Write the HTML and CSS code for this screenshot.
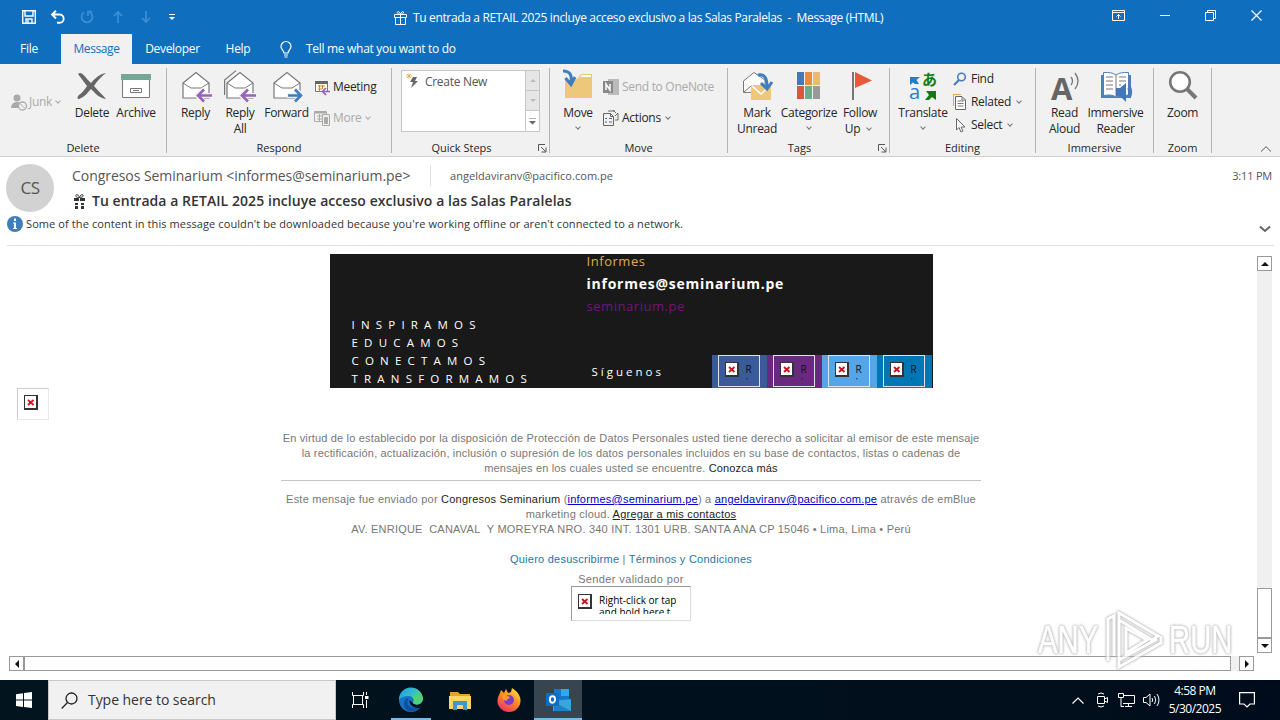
FILE: index.html
```html
<!DOCTYPE html>
<html lang="en">
<head>
    <meta charset="UTF-8">
    <title>Message (HTML)</title>
    <link rel="stylesheet" href="styles.css">
</head>
<body>
<svg class="defs" width="0" height="0">
    <symbol id="envelope" viewBox="0 0 32 32">
        <path d="M3 13 16 2.500 29 13V28H3Z" fill="#fff" stroke="#777" stroke-width="1.200"/>
        <path d="M3 13 11 18H21L29 13" fill="none" stroke="#777"/>
    </symbol>
    <symbol id="broken" viewBox="0 0 14 15">
        <path d="M0 0H14V15H0Z" fill="#333"/>
        <path d="M1 1H12V13H1Z" fill="#fff"/>
        <path d="M4 5 9.500 10M9.500 5 4 10" stroke="#d01020" stroke-width="1.800"/>
    </symbol>
    <symbol id="launcher" viewBox="0 0 9 9">
        <path d="M.5 7V.5H7M3 3 7.500 7.500M8 3.500V8H3.500" fill="none" stroke="#555"/>
    </symbol>
</svg>

<div class="titlebar">
    <div class="quick">
        <svg width="14" height="14" viewBox="0 0 14 14" fill="none" stroke="#fff" stroke-width="1.400"><path d="M.7.7H13.300V13.300H.7ZM3 1V6H11V1M4 13V9H10V13M6 10V13"/></svg>
        <svg width="16" height="14" viewBox="0 0 16 14" fill="none" stroke="#fff" stroke-width="1.900"><path d="M6 .7 2 4.500 6 8.500M2 4.500H9.500A4 4 0 0 1 9.500 12.800H7"/></svg>
        <svg width="14" height="14" viewBox="0 0 14 14" fill="none" stroke="#3c8fd4" stroke-width="1.700"><path d="M4 2.200A5.500 5.500 0 1 0 10 2.200M8 6V1.700H12"/></svg>
        <svg width="10" height="12" viewBox="0 0 10 12" fill="none" stroke="#3c8fd4" stroke-width="1.700"><path d="M5 12V1M1 5 5 1 9 5"/></svg>
        <svg width="10" height="12" viewBox="0 0 10 12" fill="none" stroke="#3c8fd4" stroke-width="1.700"><path d="M5 0V11M1 7 5 11 9 7"/></svg>
        <svg width="6" height="8" viewBox="0 0 6 8" fill="#fff"><path d="M0 1H6V2H0ZM0 4H6L3 7Z"/></svg>
    </div>
    <div class="title">
        <svg width="13" height="14" viewBox="0 0 13 14" fill="none" stroke="#fff"><path d="M.5 3.500H12.500V6.500H.5ZM1.500 6.500V13.500H11.500V6.500M6.500 3.500V13.500M6.500 3.500C2 3 3 0 4.500.7 6 1.200 6.500 3.500 6.500 3.500 7 1 9 0 9.500 1 10 2.500 8 3.300 6.500 3.500"/></svg>
        <span>Tu entrada a RETAIL 2025 incluye acceso exclusivo a las Salas Paralelas &nbsp;-&nbsp; Message (HTML)</span>
    </div>
    <div class="winbtns">
        <svg width="13" height="11" viewBox="0 0 13 11" fill="none" stroke="#fff"><path d="M.5.5H12.500V10.500H.5ZM.5 2.500H12.500M6.500 9V4.500M4.500 6.500 6.500 4.500 8.500 6.500"/></svg>
        <svg width="10" height="11" viewBox="0 0 10 11" stroke="#fff"><path d="M0 5.500H10"/></svg>
        <svg width="11" height="11" viewBox="0 0 11 11" fill="none" stroke="#fff"><path d="M.5 2.500H8.500V10.500H.5ZM2.500 2.500V.5H10.500V8.500H8.500"/></svg>
        <svg width="11" height="11" viewBox="0 0 11 11" stroke="#fff" stroke-width="1.200"><path d="M.5.5 10.500 10.500M10.500.5.5 10.500"/></svg>
    </div>
</div>

<div class="tabs">
    <span class="tab file">File</span>
    <span class="tab current">Message</span>
    <span class="tab dev">Developer</span>
    <span class="tab help">Help</span>
    <svg width="12" height="17" viewBox="0 0 12 17" fill="none" stroke="#fff" stroke-width="1.200"><path d="M4 12C4 9.500 1 8.500 1 5.500A5 5 0 0 1 11 5.500C11 8.500 8 9.500 8 12ZM4 14H8M4.500 16H7.500"/></svg>
    <span class="tell">Tell me what you want to do</span>
</div>

<div class="ribbon">
    <div class="group g-delete">
        <div class="items">
            <div class="small junk off">
                <svg width="16" height="17" viewBox="0 0 16 17"><circle cx="6" cy="4" r="3.500" fill="#aaa"/><path d="M0 14C0 7 9 7 10 10L7 14Z" fill="#aaa"/><circle cx="11.500" cy="12" r="4" fill="#f1f1f1" stroke="#aaa" stroke-width="1.300"/><path d="M9 9.500 14 14.500" stroke="#aaa"/></svg>
                <span>Junk</span><i class="arrow"></i>
            </div>
            <div class="big" style="width:44px">
                <svg width="32" height="32" viewBox="0 0 32 32"><path d="M2 4C5 1 8 5 11 9L15 13C19 8 24 4 30 3 26 6 21 11 18 16 22 21 27 25 30 29 23 28 19 23 15 19 12 22 9 27 3 29 1 29 1 27 3 25 6 23 9 19 11 16Z" fill="#666"/></svg>
                <span>Delete</span>
            </div>
            <div class="big" style="width:44px">
                <svg width="32" height="32" viewBox="0 0 32 32"><path d="M2.500 9.500H29.500V27.500H2.500Z" fill="#fff" stroke="#777"/><path d="M1 4H31V10H1Z" fill="#72a895"/><path d="M10.500 18.500H21.500V22.500H10.500ZM13 20.500H19" fill="none" stroke="#777"/></svg>
                <span>Archive</span>
            </div>
        </div>
        <div class="name">Delete</div>
    </div>

    <div class="group g-respond">
        <div class="items">
            <div class="big" style="width:45px">
                <svg width="32" height="32" viewBox="0 0 32 32"><use href="#envelope"/><path d="M32 25.500H18M24 19 17.500 25.500 24 32" fill="none" stroke="#f1f1f1" stroke-width="5"/><path d="M32 25.500H18M24 19.500 18 25.500 24 31.500" fill="none" stroke="#9563b8" stroke-width="2.600"/></svg>
                <span>Reply</span>
            </div>
            <div class="big" style="width:44px">
                <svg width="32" height="32" viewBox="0 0 32 32"><path d="M.6 25V10L12 .6" fill="none" stroke="#777" stroke-width="1.200"/><use href="#envelope"/><path d="M32 25.500H18M24 19 17.500 25.500 24 32" fill="none" stroke="#f1f1f1" stroke-width="5"/><path d="M32 25.500H18M24 19.500 18 25.500 24 31.500" fill="none" stroke="#9563b8" stroke-width="2.600"/></svg>
                <span>Reply<br>All</span>
            </div>
            <div class="big" style="width:49px">
                <svg width="32" height="32" viewBox="0 0 32 32"><use href="#envelope"/><path d="M16 25.500H30M24 19 30.500 25.500 24 32" fill="none" stroke="#f1f1f1" stroke-width="5"/><path d="M17 25.500H30M24 19.500 30 25.500 24 31.500" fill="none" stroke="#3d7ebf" stroke-width="2.600"/></svg>
                <span>Forward</span>
            </div>
            <div class="stack two">
                <div class="small">
                    <svg width="16" height="15" viewBox="0 0 16 15"><path d="M1.500 1.500H13.500V11.500H1.500Z" fill="#fff" stroke="#777"/><path d="M1 1H14V4H1Z" fill="#666"/><path d="M4 6H11M4 9H8M5.500 5V11M8.500 5V9" stroke="#d9822b"/><path d="M16 11.500H9M12 8 8.500 11.500 12 15" fill="none" stroke="#9563b8" stroke-width="1.700"/></svg>
                    <span>Meeting</span>
                </div>
                <div class="small off">
                    <svg width="16" height="16" viewBox="0 0 16 16" fill="none" stroke="#aaa"><path d="M.5 1.500H12.500V11.500H.5ZM3 6H10M3 9H8M5.500 4V11"/><path d="M.5 2.500H12" stroke-width="2"/><path d="M8.500 4.500H15.500V15.500H8.500Z" fill="#eee"/><path d="M10.500 7.500H13.500V13.500H10.500Z" fill="#aaa"/></svg>
                    <span>More</span><i class="arrow"></i>
                </div>
            </div>
        </div>
        <div class="name">Respond</div>
    </div>

    <div class="group g-quick">
        <div class="gallery">
            <div class="step">
                <svg width="14" height="16" viewBox="0 0 14 16"><path d="M7 4H11L9 8H12L5 15 7 9H4Z" fill="#666"/><path d="M3 0V6M0 3H6M1 1 5 5M5 1 1 5" stroke="#e3a94c" stroke-width=".8"/></svg>
                <span>Create New</span>
            </div>
            <div class="spin">
                <i class="up"></i><i class="down"></i><i class="more"></i>
            </div>
        </div>
        <div class="name">Quick Steps</div>
        <svg class="launch" width="9" height="9"><use href="#launcher"/></svg>
    </div>

    <div class="group g-move">
        <div class="items">
            <div class="big" style="width:44px">
                <svg width="32" height="32" viewBox="0 0 32 32"><path d="M16 8 19 4H30V28H3V10H13Z" fill="#edc77a"/><path d="M18 7 20 5H29V7Z" fill="#fff"/><path d="M1 1C8 1 10 5 9 12M3.500 8 9 14.500 13 7" fill="none" stroke="#3d7ebf" stroke-width="3"/></svg>
                <span>Move</span><i class="arrow"></i>
            </div>
            <div class="stack two">
                <div class="small off">
                    <svg width="16" height="16" viewBox="0 0 16 16"><path d="M5 0H16V16H5Z" fill="#bbb"/><path d="M0 2H10V14H0Z" fill="#888"/><path d="M3 11V5L7 11V5" fill="none" stroke="#fff" stroke-width="1.500"/></svg>
                    <span>Send to OneNote</span>
                </div>
                <div class="small">
                    <svg width="16" height="16" viewBox="0 0 16 16" fill="none" stroke="#666"><path d="M.5 3.500H7.500L10.500 6.500V15.500H.5ZM7.500 3.500V6.500H10.500M2 8.500H4M6 8.500H9M2 12H4M6 12H9M5 1H12M10 0 13 3M15 3.500V10H12M15 3 12 6"/></svg>
                    <span>Actions</span><i class="arrow"></i>
                </div>
            </div>
        </div>
        <div class="name">Move</div>
    </div>

    <div class="group g-tags">
        <div class="items">
            <div class="big" style="width:44px">
                <svg width="32" height="32" viewBox="0 0 32 32"><path d="M2.500 22.500V11L13 2.500 24 10V22Z" fill="#fff" stroke="#777"/><path d="M3 22 10 16" stroke="#777"/><path d="M10 15H30V30H10Z" fill="#edc77a"/><path d="M11 16 20 24 29 16" fill="none" stroke="#fff" stroke-width="1.500"/><path d="M17 5C24 4 26 8 26 17M20 13 26 19 31 12" fill="none" stroke="#3d7ebf" stroke-width="3"/></svg>
                <span>Mark<br>Unread</span>
            </div>
            <div class="big" style="width:60px">
                <svg width="32" height="32" viewBox="0 0 32 32"><path d="M4 2H11V15H4Z" fill="#4478b8"/><path d="M12 2H19V15H12Z" fill="#ed8b3b"/><path d="M20 2H27V15H20Z" fill="#e6bd68"/><path d="M4 16H11V29H4Z" fill="#d9583b"/><path d="M12 16H19V29H12Z" fill="#72a88b"/><path d="M20 16H27V29H20Z" fill="#999"/></svg>
                <span>Categorize</span><i class="arrow"></i>
            </div>
            <div class="big" style="width:42px">
                <svg width="32" height="32" viewBox="0 0 32 32"><path d="M9 2V30" stroke="#777" stroke-width="2"/><path d="M11 2 28 10.500 11 18Z" fill="#e8593a"/></svg>
                <span>Follow<br>Up <i class="arrow"></i></span>
            </div>
        </div>
        <div class="name">Tags</div>
        <svg class="launch" width="9" height="9"><use href="#launcher"/></svg>
    </div>

    <div class="group g-editing">
        <div class="items">
            <div class="big" style="width:50px">
                <svg width="32" height="32" viewBox="0 0 32 32"><path d="M3 7H13L9.500 10 12 14H8L6 12.500 3 15Z" fill="#1e7fd0"/><path d="M19 21H29V30L25 27 22 30H18L22 25Z" fill="#107c10"/><text x="15" y="15" class="glyph-jp">あ</text><text x="2" y="29" class="glyph-a">a</text></svg>
                <span>Translate</span><i class="arrow"></i>
            </div>
            <div class="stack three">
                <div class="small">
                    <svg width="14" height="14" viewBox="0 0 14 14" fill="none" stroke="#4478b8"><circle cx="8.500" cy="5" r="3.800" stroke-width="1.500"/><path d="M6 8 1 13" stroke-width="2"/></svg>
                    <span>Find</span>
                </div>
                <div class="small">
                    <svg width="14" height="16" viewBox="0 0 14 16"><path d="M.5 12V.5H8" fill="none" stroke="#e3a94c"/><path d="M2.500 2.500H9L12.500 6V15.500H2.500Z" fill="#fff" stroke="#666"/><path d="M4.500 7H10.500M4.500 9.500H10.500M4.500 12H10.500M9 3V6H12" fill="none" stroke="#777"/></svg>
                    <span>Related</span><i class="arrow"></i>
                </div>
                <div class="small">
                    <svg width="14" height="16" viewBox="0 0 14 16"><path d="M3.500 1.500V13L6 10.500 8 15 10 14 8 10H12Z" fill="#fff" stroke="#666"/></svg>
                    <span>Select</span><i class="arrow"></i>
                </div>
            </div>
        </div>
        <div class="name">Editing</div>
    </div>

    <div class="group g-immersive">
        <div class="items">
            <div class="big" style="width:43px">
                <svg width="32" height="32" viewBox="0 0 32 32"><text x="2" y="30" class="glyph-read">A</text><path d="M22 7Q25 11 22 15M26 3Q32 11 26 19" fill="none" stroke="#777" stroke-width="1.300"/></svg>
                <span>Read<br>Aloud</span>
            </div>
            <div class="big" style="width:59px">
                <svg width="32" height="32" viewBox="0 0 32 32"><path d="M1 5H31V28H1Z" fill="#4f81b8"/><path d="M3.500 2.500Q12 2 16 5 20 2 28.500 2.500V25.500Q20 24 16 27 12 24 3.500 25.500Z" fill="#fff" stroke="#4f81b8"/><path d="M16 5V27M6 7H13M6 11H13M6 15H13M6 19H13M19 7H26M19 11H26M19 15H21" stroke="#777"/><path d="M16 18H20L26 13V32L20 26H16Z" fill="#4478b8"/><path d="M28 18Q30 22 28 26M30 16Q33 22 30 28" fill="none" stroke="#4478b8" stroke-width="1.300"/></svg>
                <span>Immersive<br>Reader</span>
            </div>
        </div>
        <div class="name">Immersive</div>
    </div>

    <div class="group g-zoom">
        <div class="items">
            <div class="big" style="width:57px">
                <svg width="32" height="32" viewBox="0 0 32 32"><circle cx="13" cy="12" r="9.800" fill="#fff" stroke="#777" stroke-width="2.600"/><path d="M20 19 29 28" stroke="#777" stroke-width="4"/></svg>
                <span>Zoom</span>
            </div>
        </div>
        <div class="name">Zoom</div>
    </div>
    <svg class="collapse" width="12" height="6" viewBox="0 0 12 6"><path d="M1 5.500 6 .7 11 5.500" fill="none" stroke="#555"/></svg>
</div>

<div class="header">
    <div class="avatar">CS</div>
    <div class="lines">
        <div class="from">
            <span class="sender">Congresos Seminarium &lt;informes@seminarium.pe&gt;</span>
            <span class="to">angeldaviranv@pacifico.com.pe</span>
            <span class="time">3:11 PM</span>
        </div>
        <div class="subject">
            <svg width="13" height="15" viewBox="0 0 13 15" fill="#333"><path d="M1 4H6V7H1ZM7 4H12V7H7ZM2 9H5V11H2ZM8 9H11V11H8ZM2 12H5V15H2ZM8 12H11V15H8Z"/><path d="M6.500 3.500C2 4 2 0 4 .7 6 1.200 6.500 3.500 6.500 3.500 7 1 9 0 10 1 11 3 8 3.500 6.500 3.500" fill="none" stroke="#333"/></svg>
            <span>Tu entrada a RETAIL 2025 incluye acceso exclusivo a las Salas Paralelas</span>
        </div>
    </div>
</div>
<div class="infobar">
    <svg width="16" height="16" viewBox="0 0 16 16"><circle cx="8" cy="8" r="8" fill="#3f7dbb"/><path d="M7 2.500H9V5H7ZM6 6.500H9V12H10V13H6V12H7V7.500H6Z" fill="#fff"/></svg>
    <span>Some of the content in this message couldn't be downloaded because you're working offline or aren't connected to a network.</span>
    <svg class="expand" width="12" height="8" viewBox="0 0 12 8"><path d="M1 1.500 6 6 11 1.500" fill="none" stroke="#666" stroke-width="2"/></svg>
</div>

<div class="viewer">
    <div class="mail">
        <div class="side">
            <div class="noimg tiny"><svg width="14" height="15"><use href="#broken"/></svg></div>
        </div>
        <div class="content">
            <div class="banner">
                <div class="motto">INSPIRAMOS<br>EDUCAMOS<br>CONECTAMOS<br>TRANSFORMAMOS</div>
                <div class="contact">
                    <div class="info">Informes</div>
                    <div class="address">informes@seminarium.pe</div>
                    <div class="site">seminarium.pe</div>
                    <div class="follow">
                        <span>Síguenos</span>
                        <div class="social">
                            <div class="fb"><p><svg width="14" height="15"><use href="#broken"/></svg><b>R<br>:</b></p></div>
                            <div class="ig"><p><svg width="14" height="15"><use href="#broken"/></svg><b>R<br>:</b></p></div>
                            <div class="tw"><p><svg width="14" height="15"><use href="#broken"/></svg><b>R<br>:</b></p></div>
                            <div class="in"><p><svg width="14" height="15"><use href="#broken"/></svg><b>R<br>:</b></p></div>
                        </div>
                    </div>
                </div>
            </div>
            <div class="legal">
                <div>En virtud de lo establecido por la disposición de Protección de Datos Personales usted tiene derecho a solicitar al emisor de este mensaje</div>
                <div>la rectificación, actualización, inclusión o supresión de los datos personales incluidos en su base de contactos, listas o cadenas de</div>
                <div>mensajes en los cuales usted se encuentre. <em>Conozca más</em></div>
            </div>
            <div class="legal sent">
                <div>Este mensaje fue enviado por <em>Congresos Seminarium</em> (<a>informes@seminarium.pe</a>) a <a>angeldaviranv@pacifico.com.pe</a> através de emBlue</div>
                <div>marketing cloud. <em class="add">Agregar a mis contactos</em></div>
                <div>AV. ENRIQUE&nbsp; CANAVAL&nbsp; Y MOREYRA NRO. 340 INT. 1301 URB. SANTA ANA CP 15046 • Lima, Lima • Perú</div>
            </div>
            <div class="legal links"><span>Quiero desuscribirme</span> | <span>Términos y Condiciones</span></div>
            <div class="legal valid">Sender validado por</div>
            <div class="noimg wide"><svg width="14" height="15"><use href="#broken"/></svg><span>Right-click or tap<br>and hold here t</span></div>
        </div>
    </div>
    <div class="vscroll">
        <i class="btn up"></i>
        <i class="thumb"></i>
        <i class="btn down"></i>
    </div>
</div>
<div class="hscroll">
    <i class="btn left"></i>
    <i class="thumb"></i>
    <i class="btn right"></i>
</div>

<div class="watermark">
    <span>ANY</span>
    <svg width="58" height="62" viewBox="0 0 58 62"><path d="M3 52V10L9 7V47M14 4 53 27 47 31 14 11ZM14 4V51L52 30M14 51V58L56 34V27M21 19V44L42 31Z" fill="none" stroke="#fff" stroke-width="3"/></svg>
    <span>RUN</span>
</div>

<div class="taskbar">
    <div class="start"><svg width="16" height="16" viewBox="0 0 16 16" fill="#fff"><path d="M0 2.200 7 1.200V7.600H0ZM8 1 16 0V7.600H8ZM0 8.500H7V14.900L0 13.900ZM8 8.500H16V16L8 15Z"/></svg></div>
    <div class="search">
        <svg width="17" height="17" viewBox="0 0 17 17" fill="none" stroke="#222" stroke-width="1.300"><circle cx="10.500" cy="6.500" r="5.500"/><path d="M6.500 10.500.7 16.500"/></svg>
        <span>Type here to search</span>
    </div>
    <div class="app"><svg width="17" height="16" viewBox="0 0 17 16" fill="none" stroke="#fff"><path d="M.5 0V3.500H11.500V0M1.500 3.500V12.500M10.500 3.500V12.500M.5 16V12.500H11.500V16M14.500 0V3M14.500 8V16"/><path d="M13 4H16.500V7H13Z" fill="#fff" stroke="none"/></svg></div>
    <div class="app run">
        <svg width="24" height="24" viewBox="0 0 24 24">
            <defs><linearGradient id="edge" x1="0" y1="0" x2="1" y2=".6"><stop offset="0" stop-color="#1b9de2"/><stop offset=".6" stop-color="#35c1c8"/><stop offset="1" stop-color="#6bd846"/></linearGradient></defs>
            <circle cx="12" cy="12" r="12" fill="#1672c4"/>
            <path d="M0 12A12 12 0 0 1 24 11C24 16 17 18 14 15 16 12 14 8 10 8 5 8 1 10 0 12Z" fill="url(#edge)"/>
            <path d="M9.500 10C6 17 12 22 21.500 19 15 26 5 24 5 16 5 12 8 10 9.500 10Z" fill="#104f9b"/>
            <path d="M14 15C17 18 23 17 24 11.500L24 16 22 19.500C16 21 10 18 10.500 12Z" fill="#02131e"/>
            <path d="M13 9C16 11 15 14 14 15 15.500 17 21 17.500 23.500 13L24 10 19 6Z" fill="#4fd07a"/>
        </svg>
    </div>
    <div class="app"><svg width="22" height="19" viewBox="0 0 22 19"><path d="M1 1H9L11 3H21V18H1Z" fill="#e3a324"/><path d="M0 5H22V18H0Z" fill="#ffd568"/><path d="M4 19V10H18V19H14V14H8V19Z" fill="#4592cc"/></svg></div>
    <div class="app">
        <svg width="24" height="24" viewBox="0 0 24 24">
            <defs><linearGradient id="fox" x1=".8" y1="0" x2=".2" y2="1"><stop offset="0" stop-color="#ffe13a"/><stop offset=".45" stop-color="#ff8b20"/><stop offset="1" stop-color="#f02a6a"/></linearGradient></defs>
            <path d="M4 2 7 5 9 1 11 5 14 4 15 0C20 3 24 8 23.500 13A11.500 11 0 0 1 .5 13C.5 8 3 6 4 2Z" fill="url(#fox)"/>
            <circle cx="12" cy="12" r="5" fill="#7b3bd0"/><path d="M5 7C8 6 10 8 13 9 12 11 10 11 9 13 6 12 5 10 5 7Z" fill="#ff9b22"/>
        </svg>
    </div>
    <div class="app run active">
        <svg width="25" height="22" viewBox="0 0 25 22"><path d="M8 0H23V15H8Z" fill="#1677c9"/><path d="M15 0H23V7H15Z" fill="#35a7e8"/><path d="M7 12 25 10V22H7Z" fill="#38a5df"/><path d="M8 13 25 22H8Z" fill="#1c82c8"/><path d="M0 4H13V17H0Z" fill="#0f6cc4"/><ellipse cx="6.500" cy="10.500" rx="2.600" ry="3.200" fill="none" stroke="#fff" stroke-width="1.900"/></svg>
    </div>
    <div class="tray">
        <svg width="12" height="7" viewBox="0 0 12 7" fill="none" stroke="#fff" stroke-width="1.200"><path d="M.5 6.500 6 1 11.500 6.500"/></svg>
        <svg class="cam" width="12" height="16" viewBox="0 0 12 16" fill="none" stroke="#fff"><path d="M1.500 4.500H8.500V11.500H1.500ZM8.500 7 11.500 5.500V10.500L8.500 9M2 2Q5 0 8 2M2 14Q5 16 8 14"/></svg>
        <svg class="net" width="17" height="14" viewBox="0 0 17 14" fill="none" stroke="#fff"><path d="M5 2.500H16.500V10.500H5M10.500 10.500V13M7 13.500H14M.5.500H5.500V4.500H.5ZM3 4.500V13.500H6"/></svg>
        <svg width="17" height="14" viewBox="0 0 17 14" fill="none" stroke="#fff"><path d="M.5 4.500H3L7 1V13L3 9.500H.5ZM9 5Q10.500 7 9 9M11.500 3Q14 7 11.500 11M14 1Q18 7 14 13"/></svg>
        <div class="clock"><span>4:58 PM</span><br>5/30/2025</div>
        <svg width="16" height="16" viewBox="0 0 16 16" fill="none" stroke="#fff" stroke-width="1.200"><path d="M.6.6H15.400V12H11L8 15 5 12H.6Z"/></svg>
    </div>
</div>
</body>
</html>
```
FILE: styles.css
```css
* {
    margin: 0;
    padding: 0;
    box-sizing: border-box;
}

body {
    width: 1280px;
    height: 720px;
    overflow: hidden;
    background: #fff;
    font: 12px/16px "Open Sans", "Noto Sans", sans-serif;
    color: #333;
    white-space: nowrap;
}

svg {
    display: block;
    flex: none;
    overflow: visible;
}

.defs {
    position: absolute;
}

i, em {
    font-style: normal;
}

/* title bar */
.titlebar {
    display: flex;
    align-items: center;
    height: 34px;
    background: #106ebe;
    color: #fff;
}

.quick {
    display: flex;
    align-items: center;
    gap: 14px;
    width: 394px;
    padding-left: 22px;
}

.quick svg:nth-child(n+4) {
    margin-left: 5px;
}

.quick svg:nth-child(n+5) {
    margin-left: 4px;
}

.title {
    display: flex;
    align-items: center;
    gap: 6px;
    padding-top: 2px;
    width: 718px;
    letter-spacing: -0.35px;
}

.winbtns {
    display: flex;
    align-items: center;
    gap: 35px;
    padding-bottom: 4px;
}

/* tabs */
.tabs {
    display: flex;
    align-items: center;
    height: 30px;
    background: #106ebe;
    color: #fff;
    letter-spacing: -0.3px;
}

.tab {
    line-height: 30px;
    text-align: center;
}

.tab.file {
    width: 58px;
    margin-right: 3px;
}

.tab.current {
    width: 71px;
    background: #f1f1f1;
    color: #106ebe;
    letter-spacing: -0.4px;
}

.tab.dev {
    width: 81px;
}

.tab.help {
    width: 50px;
    margin-right: 17px;
}

.tell {
    margin-left: 14px;
}

/* ribbon */
.ribbon {
    display: flex;
    height: 93px;
    padding-top: 4px;
    background: #f1f1f1;
    border-bottom: 1px solid #cfcfcf;
    color: #262626;
    letter-spacing: -0.3px;
}

.group {
    position: relative;
    display: flex;
    flex-direction: column;
    height: 85px;
    border-right: 1px solid #b4b4b4;
}

.items {
    display: flex;
    height: 72px;
    padding-top: 2px;
}

.name {
    margin-top: auto;
    line-height: 11px;
    font-size: 11px;
    text-align: center;
    letter-spacing: 0;
}

.g-delete {
    width: 167px;
}

.g-delete .items {
    padding-left: 11px;
}

.g-respond {
    width: 225px;
}

.g-respond .items {
    padding-left: 6px;
}

.g-quick {
    width: 158px;
}

.g-quick .name {
    padding-right: 18px;
}

.g-move {
    width: 178px;
}

.g-move .items {
    padding-left: 6px;
}

.g-tags {
    width: 162px;
}

.g-tags .items {
    padding-left: 7px;
}

.g-tags .name {
    padding-right: 18px;
}

.g-editing {
    width: 146px;
}

.g-editing .items {
    padding-left: 8px;
}

.g-immersive {
    width: 118px;
}

.g-immersive .items {
    padding-left: 7px;
}

.g-zoom {
    width: 58px;
}

.big {
    display: flex;
    flex-direction: column;
    align-items: center;
    text-align: center;
}

.big svg {
    margin-bottom: 3px;
}

.big > .arrow {
    margin-top: 4px;
}

.small {
    display: flex;
    align-items: center;
    gap: 3px;
}

.junk {
    gap: 2px;
    width: 59px;
    height: 64px;
}

.off {
    color: #aaa;
}

.arrow {
    display: inline-block;
    width: 4px;
    height: 4px;
    margin: 0 4px 3px;
    border: solid #777;
    border-width: 0 1px 1px 0;
    transform: rotate(45deg);
}

.small .arrow {
    margin-left: 2px;
}

.off .arrow {
    border-color: #aaa;
}

.stack {
    display: flex;
    flex-direction: column;
    padding-left: 3px;
}

.stack.two {
    gap: 15px;
    padding-top: 9px;
}

.stack.three {
    gap: 7px;
    padding: 1px 0 0 5px;
}

.stack.three .small {
    gap: 4px;
    height: 16px;
}

.gallery {
    display: flex;
    justify-content: space-between;
    width: 139px;
    height: 62px;
    margin: 2px 0 0 9px;
    border: 1px solid #c6c6c6;
    background: #fff;
    color: #555;
}

.step {
    display: flex;
    gap: 5px;
    padding: 2px 0 0 4px;
}

.step span {
    padding-top: 1px;
}

.spin {
    width: 14px;
    border-left: 1px solid #c6c6c6;
}

.spin i {
    display: flex;
    align-items: center;
    justify-content: center;
    height: 20px;
    background: #e6e6e6;
    border-bottom: 1px solid #c6c6c6;
}

.spin i.more {
    background: #fff;
    border: 0;
}

.spin i::after {
    content: "";
    border: solid transparent;
    border-width: 0 3px 3px;
    border-bottom-color: #bbb;
}

.spin i.down::after {
    border-width: 3px 3px 0;
    border-top-color: #bbb;
}

.spin i.more::after {
    width: 7px;
    height: 7px;
    border: 0;
    background: #666;
    clip-path: polygon(0 0, 100% 0, 100% 15%, 0 15%, 0 50%, 100% 50%, 50% 100%, 0 50%);
}

.launch {
    position: absolute;
    right: 2px;
    bottom: 0;
}

.collapse {
    align-self: flex-end;
    margin: 0 8px 4px auto;
}

.glyph-jp {
    font: 700 15px "Noto Sans CJK JP", sans-serif;
    fill: #107c10;
}

.glyph-a {
    font: 20px "Open Sans", sans-serif;
    fill: #1e7fd0;
}

.glyph-read {
    font: 700 31px "Open Sans", sans-serif;
    fill: #666;
}

/* message header */
.header {
    display: flex;
    height: 57px;
    padding: 7px 8px 0 6px;
}

.avatar {
    width: 48px;
    height: 48px;
    margin-right: 18px;
    border-radius: 50%;
    background: #d2d2d2;
    font-size: 17px;
    line-height: 48px;
    text-align: center;
    letter-spacing: -0.5px;
    color: #555;
}

.lines {
    flex: 1;
}

.from {
    display: flex;
    align-items: center;
    height: 22px;
    color: #555;
}

.sender {
    width: 359px;
    border-right: 1px solid #e3e3e3;
    font-size: 14px;
    line-height: 21px;
    letter-spacing: -0.05px;
}

.to {
    margin-left: 19px;
    padding-top: 2px;
    font-size: 11px;
    letter-spacing: 0.05px;
}

.time {
    margin-left: auto;
    padding-top: 2px;
    font-size: 11px;
    letter-spacing: -0.2px;
}

.subject {
    display: flex;
    align-items: center;
    gap: 6px;
    height: 30px;
    padding-left: 1px;
    font-size: 14px;
    font-weight: 600;
    letter-spacing: 0.06px;
}

.infobar {
    display: flex;
    gap: 3px;
    height: 32px;
    margin: 0 6px 0 7px;
    padding-top: 2px;
    border-bottom: 1px solid #e0e0e0;
    font-size: 11px;
    letter-spacing: 0.095px;
}

.expand {
    margin: 9px 3px 0 auto;
}

/* reading pane */
.viewer {
    display: flex;
    height: 410px;
}

.mail {
    display: flex;
    width: 1257px;
    padding-top: 8px;
}

.side {
    width: 281px;
    padding: 134px 0 0 17px;
}

.noimg {
    display: flex;
    border: 1px solid #dcdcdc;
    border-top-color: #999;
    border-left-color: #999;
}

.noimg.tiny {
    width: 32px;
    height: 32px;
    padding: 6px;
    border-color: #ccc #e8e8e8 #e8e8e8 #ccc;
}

.content {
    width: 700px;
}

.banner {
    display: flex;
    width: 603px;
    height: 134px;
    margin: 0 auto;
    background: #191919;
    color: #fff;
}

.motto {
    width: 257px;
    padding: 62px 0 0 22px;
    font-size: 11.500px;
    line-height: 18px;
    letter-spacing: 6.200px;
}

.contact {
    flex: 1;
    font-size: 13px;
    letter-spacing: 0.55px;
}

.info {
    line-height: 15px;
    color: #d9b24a;
}

.address {
    line-height: 30px;
    font-size: 14px;
    font-weight: 700;
    letter-spacing: 0.75px;
}

.site {
    line-height: 14px;
    color: #73147b;
}

.follow {
    display: flex;
    justify-content: space-between;
    margin-top: 42px;
    padding-right: 1px;
}

.follow > span {
    padding: 9px 0 0 5px;
    font-size: 11.500px;
    letter-spacing: 3px;
}

.social {
    display: flex;
}

.social div {
    width: 55px;
    height: 33px;
    padding: 0 7px 0 6px;
}

.social p {
    display: flex;
    gap: 7px;
    width: 42px;
    height: 32px;
    padding: 6px 0 0 6px;
    border: 1px solid #dfe3ea;
    font-size: 10px;
    line-height: 11px;
    letter-spacing: 0;
    color: #111;
}

.social b {
    height: 19px;
    padding-top: 2px;
    overflow: hidden;
    font-weight: 400;
}

.fb {
    background: #3b5a9a;
}

.ig {
    background: #68297f;
}

.tw {
    background: #55a5e8;
}

.in {
    background: #0077b5;
}

.legal {
    padding-top: 43px;
    font: 11px/15px "Liberation Sans", Arial, sans-serif;
    text-align: center;
    letter-spacing: 0.17px;
    color: #777;
}

.legal em {
    color: #222;
}

.legal a {
    color: #0000cc;
    text-decoration: underline;
}

.legal .add {
    text-decoration: underline;
}

.legal.sent {
    margin-top: 4px;
    padding-top: 11px;
    border-top: 1px solid #c4c4c4;
    letter-spacing: 0.22px;
}

.legal.links {
    padding-top: 15px;
    letter-spacing: 0.24px;
}

.legal.links span {
    color: #26769f;
}

.legal.valid {
    padding-top: 5px;
    letter-spacing: 0.38px;
}

.noimg.wide {
    gap: 7px;
    width: 120px;
    height: 35px;
    margin: -1px auto 0;
    padding: 7px 6px;
    font-size: 10px;
    line-height: 12px;
    color: #000;
}

.noimg.wide span {
    height: 20px;
    overflow: hidden;
}

/* scrollbars */
.vscroll {
    display: flex;
    flex-direction: column;
    width: 15px;
    height: 397px;
    margin-top: 10px;
    background: #f0f0f0;
}

.hscroll {
    display: flex;
    width: 1245px;
    height: 15px;
    margin: 0 0 9px 9px;
    background: #f0f0f0;
}

.btn, .thumb {
    display: flex;
    align-items: center;
    justify-content: center;
    border: 1px solid #999;
    background: #fff;
}

.btn {
    width: 15px;
    height: 15px;
}

.btn::after {
    content: "";
    border: 4px solid transparent;
}

.btn.up::after {
    border-top: 0;
    border-bottom-color: #111;
}

.btn.down::after {
    border-bottom: 0;
    border-top-color: #111;
}

.btn.left::after {
    border-left: 0;
    border-right-color: #111;
}

.btn.right::after {
    border-right: 0;
    border-left-color: #111;
}

.vscroll .thumb {
    height: 50px;
    margin-top: auto;
}

.hscroll .thumb {
    width: 1207px;
}

.hscroll .right {
    margin-left: auto;
}

.watermark {
    position: absolute;
    left: 1038px;
    top: 609px;
    display: flex;
    align-items: center;
    gap: 6px;
    filter: drop-shadow(0 0 1px #999) drop-shadow(0 0 1px #ccc);
    opacity: 0.8;
}

.watermark span {
    width: 61px;
    font: 38px/62px "Liberation Sans", Arial, sans-serif;
    color: #fff;
    -webkit-text-stroke: 0.5px #fff;
    transform: scaleX(0.77);
    transform-origin: left;
}

/* taskbar */
.taskbar {
    display: flex;
    height: 40px;
    background: linear-gradient(90deg, #02151f, #000c1b);
    color: #fff;
}

.start, .app {
    display: flex;
    align-items: center;
    justify-content: center;
    width: 48px;
}

.app {
    margin-right: 1px;
}

.search {
    display: flex;
    align-items: center;
    gap: 10px;
    width: 288px;
    padding-left: 12px;
    border: 1px solid #c8c8c8;
    background: #f1f1f1;
    font-size: 14px;
    letter-spacing: -0.05px;
    color: #333;
}

.search + .app {
    margin-right: 3px;
}

.run {
    background: linear-gradient(#76b9ed, #76b9ed) bottom / 40px 2px no-repeat;
}

.active {
    background-size: 48px 2px;
    background-color: #36454f;
}

.tray {
    display: flex;
    align-items: center;
    gap: 12px;
    margin-left: auto;
    margin-right: 25px;
}

.cam {
    margin-right: -2px;
}

.net {
    margin-right: -4px;
}

.clock {
    margin: 0 6px 0 -3px;
    font-size: 12px;
    line-height: 18px;
    text-align: center;
    letter-spacing: -0.5px;
}
```
